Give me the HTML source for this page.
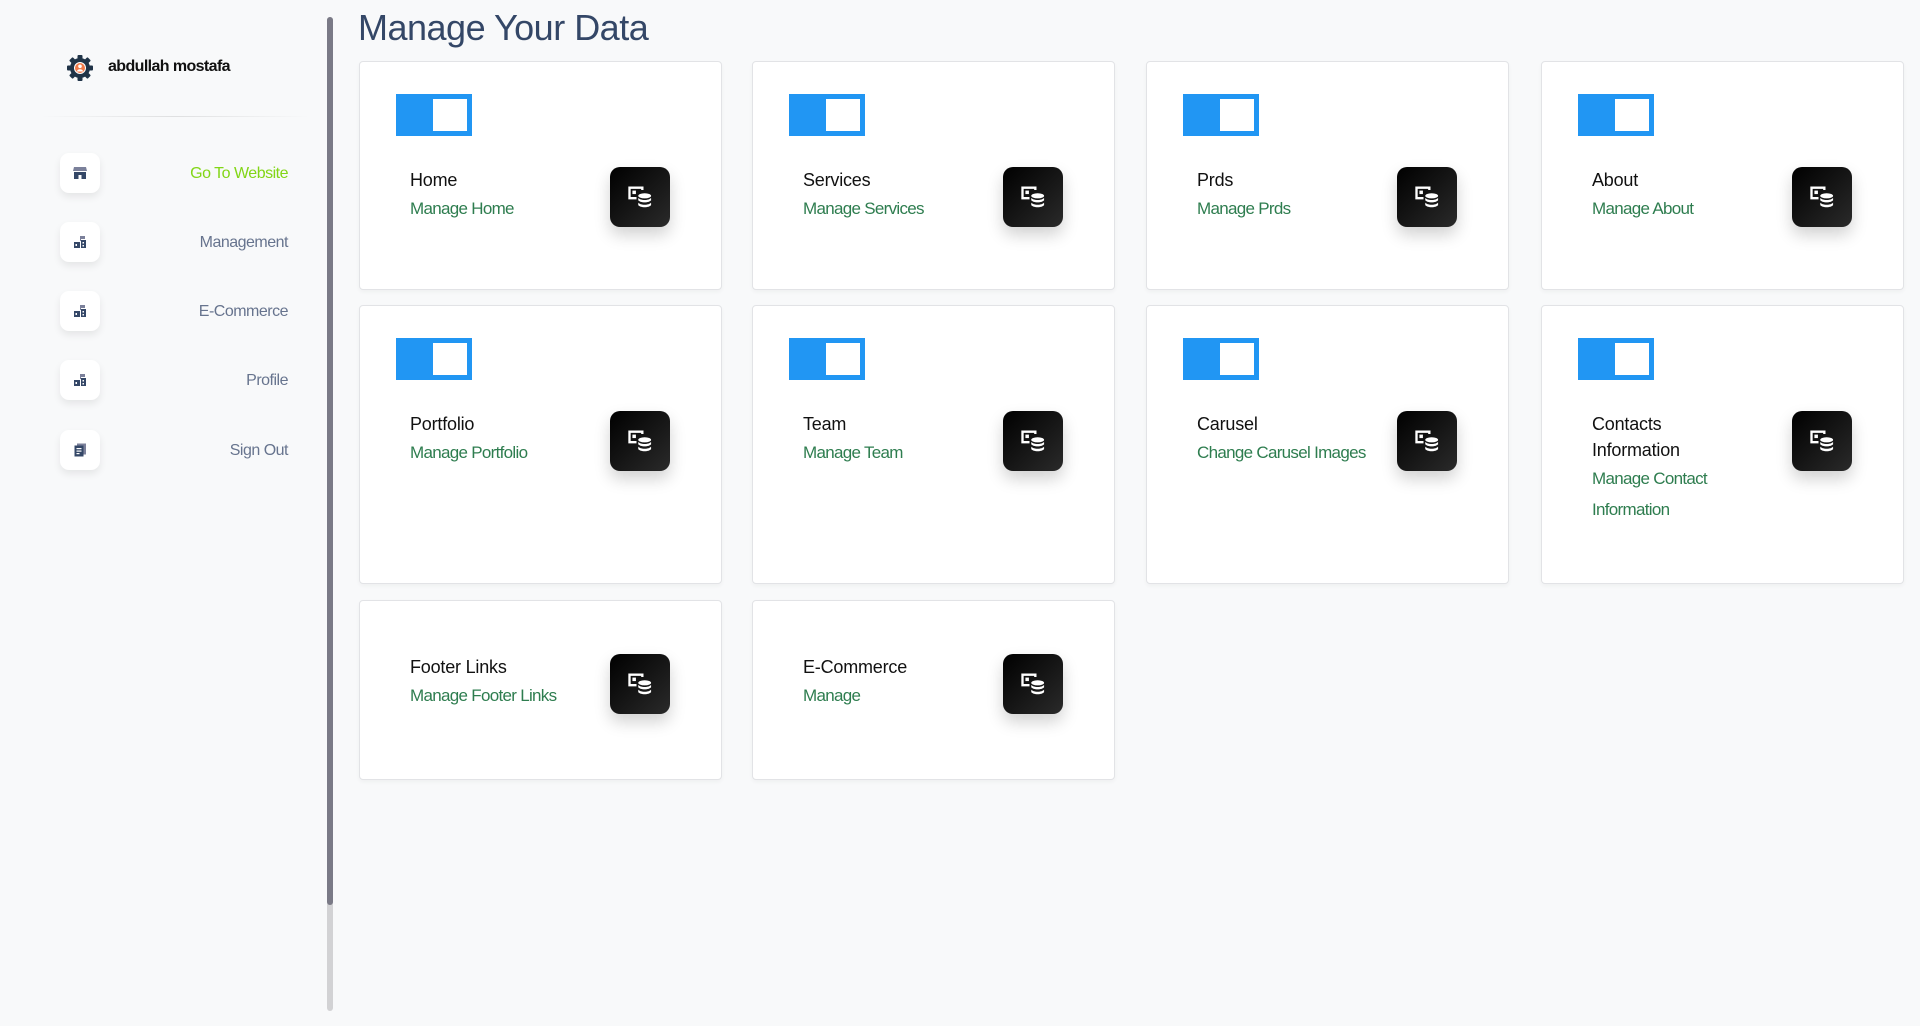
<!DOCTYPE html>
<html><head><meta charset="utf-8"><style>
*{box-sizing:border-box;margin:0;padding:0}
html,body{width:1920px;height:1026px;overflow:hidden;background:#f8f9fa;font-family:"Liberation Sans",sans-serif}
.sb{position:absolute;left:0;top:0;width:320px;height:1026px}
.name{position:absolute;left:108px;top:58px;font-size:16px;font-weight:bold;color:#111;letter-spacing:-0.6px}
.gear{position:absolute;left:66px;top:54px}
.div{position:absolute;left:40px;top:116px;width:270px;height:1px;background:linear-gradient(90deg,rgba(0,0,0,0),rgba(0,0,0,.1),rgba(0,0,0,0))}
.nav{position:absolute;left:60px;width:228px;height:40px}
.nav .ib{position:absolute;left:0;top:0;width:40px;height:40px;background:#fff;border-radius:9px;box-shadow:0 4px 8px rgba(0,0,0,.08);display:flex;align-items:center;justify-content:center}
.nav span{position:absolute;right:0;top:12px;font-size:16px;color:#67748e;letter-spacing:-0.5px}
.scroll{position:absolute;left:327px;top:17px;width:6px;height:994px;background:#d2d2d4;border-radius:3px}
.scroll:before{content:"";position:absolute;left:0;top:0;width:6px;height:888px;background:#7a7a86;border-radius:3px}
h1{position:absolute;left:358px;top:7px;font-size:36px;font-weight:normal;color:#344767;letter-spacing:-0.5px}
.card{position:absolute;width:363px;background:#fff;border:1px solid #e2e3e6;border-radius:4px;box-shadow:0 2px 4px rgba(0,0,0,.04);padding:32px 0 0 50px}
.tg{width:76px;height:42px;background:#2196f3;position:relative;margin-left:-14px;margin-bottom:31px}
.tg:after{content:"";position:absolute;left:37px;top:5px;width:34px;height:32px;background:#fff}
.row{display:flex;align-items:flex-start}
.txt{width:200px}
.t{font-size:18px;color:#111;line-height:26px;letter-spacing:-0.2px}
.l{font-size:17px;color:#2e7d4f;line-height:31px;letter-spacing:-0.7px}
.bx{width:60px;height:60px;border-radius:10px;background:linear-gradient(135deg,#000,#2a2a2a);box-shadow:0 8px 16px rgba(0,0,0,.18);display:flex;align-items:center;justify-content:center}
</style></head><body>
<div class="sb">
<svg class="gear" width="28" height="28" viewBox="0 0 28 28"><g fill="#1f3347"><circle cx="14" cy="14" r="10"/><rect x="11.5" y="1" width="5" height="26" rx="1"/><rect x="1" y="11.5" width="26" height="5" rx="1"/><rect x="11.5" y="1" width="5" height="26" rx="1" transform="rotate(45 14 14)"/><rect x="11.5" y="1" width="5" height="26" rx="1" transform="rotate(-45 14 14)"/></g><circle cx="14" cy="14" r="6" fill="#fff"/><circle cx="14" cy="14" r="5" fill="#f07a4a"/><circle cx="14" cy="12.3" r="1.8" fill="#fff"/><path d="M10.8 17.5a3.3 3 0 0 1 6.4 0z" fill="#fff"/></svg>
<div class="name">abdullah mostafa</div>
<div class="div"></div>
<div class="nav" style="top:153px"><div class="ib"><svg width="16" height="16" viewBox="0 0 16 16"><path d="M2 2h12l1 4H1z" fill="#7b809a"/><path d="M2 7h12v7H9.5v-4h-3v4H2z" fill="#344767"/></svg></div><span style="color:#82d616">Go To Website</span></div>
<div class="nav" style="top:222px"><div class="ib"><svg width="16" height="16" viewBox="0 0 16 16"><path d="M8 2h5v3H9v2H8z" fill="#7b809a"/><rect x="2" y="8" width="6" height="6" fill="#344767"/><rect x="9" y="6" width="5" height="8" fill="#344767"/><rect x="3.5" y="10" width="1.5" height="2" fill="#fff"/><rect x="10.5" y="8" width="1.5" height="1.5" fill="#fff"/><rect x="10.5" y="11" width="1.5" height="1.5" fill="#fff"/></svg></div><span>Management</span></div>
<div class="nav" style="top:291px"><div class="ib"><svg width="16" height="16" viewBox="0 0 16 16"><path d="M8 2h5v3H9v2H8z" fill="#7b809a"/><rect x="2" y="8" width="6" height="6" fill="#344767"/><rect x="9" y="6" width="5" height="8" fill="#344767"/><rect x="3.5" y="10" width="1.5" height="2" fill="#fff"/><rect x="10.5" y="8" width="1.5" height="1.5" fill="#fff"/><rect x="10.5" y="11" width="1.5" height="1.5" fill="#fff"/></svg></div><span>E-Commerce</span></div>
<div class="nav" style="top:360px"><div class="ib"><svg width="16" height="16" viewBox="0 0 16 16"><path d="M8 2h5v3H9v2H8z" fill="#7b809a"/><rect x="2" y="8" width="6" height="6" fill="#344767"/><rect x="9" y="6" width="5" height="8" fill="#344767"/><rect x="3.5" y="10" width="1.5" height="2" fill="#fff"/><rect x="10.5" y="8" width="1.5" height="1.5" fill="#fff"/><rect x="10.5" y="11" width="1.5" height="1.5" fill="#fff"/></svg></div><span>Profile</span></div>
<div class="nav" style="top:430px"><div class="ib"><svg width="16" height="16" viewBox="0 0 16 16"><rect x="5" y="1.5" width="9" height="11" fill="#7b809a"/><rect x="2.5" y="3.5" width="9" height="11" fill="#344767"/><rect x="4.5" y="6" width="5" height="1.2" fill="#fff"/><rect x="4.5" y="8.5" width="5" height="1.2" fill="#fff"/><rect x="4.5" y="11" width="3" height="1.2" fill="#fff"/></svg></div><span>Sign Out</span></div>
<div class="scroll"></div>
</div>
<h1>Manage Your Data</h1>

<div class="card" style="left:359px;top:61px;height:229px"><div class="tg"></div><div class="row"><div class="txt"><div class="t">Home</div><div class="l">Manage Home</div></div><div class="bx">ICON</div></div></div>
<div class="card" style="left:752px;top:61px;height:229px"><div class="tg"></div><div class="row"><div class="txt"><div class="t">Services</div><div class="l">Manage Services</div></div><div class="bx">ICON</div></div></div>
<div class="card" style="left:1146px;top:61px;height:229px"><div class="tg"></div><div class="row"><div class="txt"><div class="t">Prds</div><div class="l">Manage Prds</div></div><div class="bx">ICON</div></div></div>
<div class="card" style="left:1541px;top:61px;height:229px"><div class="tg"></div><div class="row"><div class="txt"><div class="t">About</div><div class="l">Manage About</div></div><div class="bx">ICON</div></div></div>

<div class="card" style="left:359px;top:305px;height:279px"><div class="tg"></div><div class="row"><div class="txt"><div class="t">Portfolio</div><div class="l">Manage Portfolio</div></div><div class="bx">ICON</div></div></div>
<div class="card" style="left:752px;top:305px;height:279px"><div class="tg"></div><div class="row"><div class="txt"><div class="t">Team</div><div class="l">Manage Team</div></div><div class="bx">ICON</div></div></div>
<div class="card" style="left:1146px;top:305px;height:279px"><div class="tg"></div><div class="row"><div class="txt"><div class="t">Carusel</div><div class="l">Change Carusel Images</div></div><div class="bx">ICON</div></div></div>
<div class="card" style="left:1541px;top:305px;height:279px"><div class="tg"></div><div class="row"><div class="txt" style="width:150px;margin-right:50px"><div class="t">Contacts Information</div><div class="l">Manage Contact Information</div></div><div class="bx">ICON</div></div></div>

<div class="card" style="left:359px;top:600px;height:180px;padding-top:53px"><div class="row"><div class="txt"><div class="t">Footer Links</div><div class="l">Manage Footer Links</div></div><div class="bx">ICON</div></div></div>
<div class="card" style="left:752px;top:600px;height:180px;padding-top:53px"><div class="row"><div class="txt"><div class="t">E-Commerce</div><div class="l">Manage</div></div><div class="bx">ICON</div></div></div>

<script>
var s='<svg width="28" height="28" viewBox="0 0 24 24"><path d="M2 3h13v3h-2V5H4v7h5v2H2z" fill="#fff"/><rect x="5.5" y="6.5" width="3" height="3" fill="#fff"/><ellipse cx="16" cy="11" rx="5.5" ry="2.2" fill="#fff"/><path d="M10.5 12.8c1 1.2 3 1.8 5.5 1.8s4.5-.6 5.5-1.8v2c-1 1.2-3 1.8-5.5 1.8s-4.5-.6-5.5-1.8z" fill="#fff"/><path d="M10.5 16.8c1 1.2 3 1.8 5.5 1.8s4.5-.6 5.5-1.8v2.2c-1 1.2-3 1.8-5.5 1.8s-4.5-.6-5.5-1.8z" fill="#fff"/></svg>';
document.querySelectorAll('.bx').forEach(function(b){b.innerHTML=s});
</script>
</body></html>
